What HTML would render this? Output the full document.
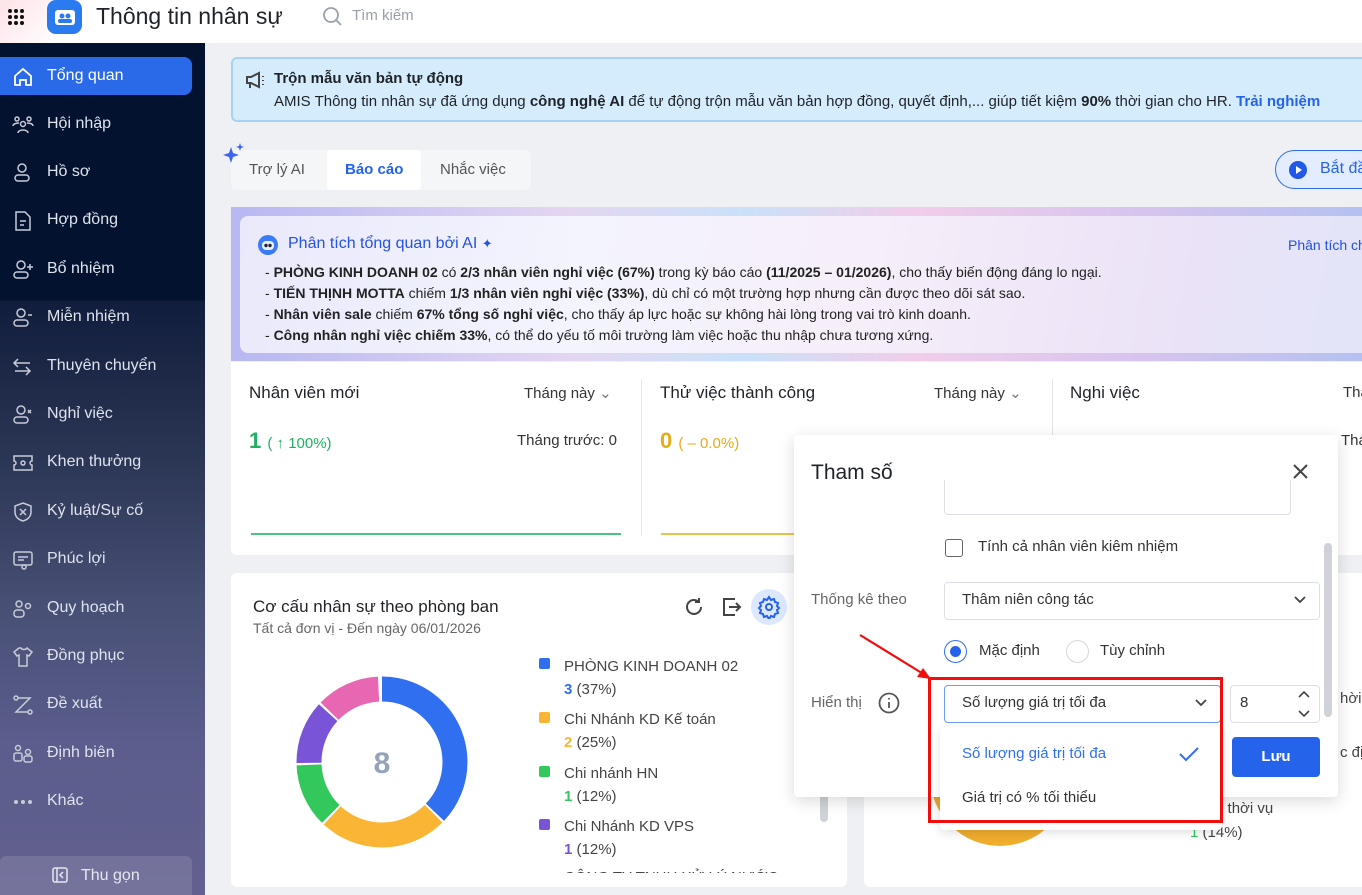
<!DOCTYPE html>
<html><head><meta charset="utf-8"><style>
*{box-sizing:border-box;margin:0;padding:0}
body{width:1362px;height:895px;overflow:hidden;position:relative;background:#eef0f3;font-family:"Liberation Sans",sans-serif;color:#1f2329}
.a{position:absolute;white-space:nowrap}
.side{left:0;top:43px;width:205px;height:852px;background:linear-gradient(180deg,#03132f 0,#03132f 257px,#111d3c 258px,#2c3655 420px,#474f74 560px,#5b5d8c 700px,#62608f 852px)}
.it{position:absolute;left:0;width:192px;height:38px;color:#dfe3ee;font-size:16px;line-height:38px;padding-left:47px;white-space:nowrap}
.it svg{position:absolute;left:12px;top:9px}
.b{font-weight:bold}
.ai p{font-size:14px;line-height:21px;color:#222}
.tt{font-size:17px;color:#1f2329}
</style></head><body>
<!-- header -->
<div class="a" style="left:0;top:0;width:1362px;height:43px;background:#fff"></div>
<div class="a" style="left:0;top:0;width:60px;height:43px;background:linear-gradient(135deg,#fde3e8,#fff)"></div>
<svg class="a" style="left:7px;top:8px" width="20" height="20"><g fill="#111"><circle cx="3" cy="3" r="2"/><circle cx="9" cy="3" r="2"/><circle cx="15" cy="3" r="2"/><circle cx="3" cy="9" r="2"/><circle cx="9" cy="9" r="2"/><circle cx="15" cy="9" r="2"/><circle cx="3" cy="15" r="2"/><circle cx="9" cy="15" r="2"/><circle cx="15" cy="15" r="2"/></g></svg>
<div class="a" style="left:47px;top:0;width:35px;height:34px;background:#2a7bf0;border-radius:9px"></div>
<svg class="a" style="left:54px;top:7px" width="22" height="20"><rect x="1" y="3" width="20" height="15" rx="3" fill="#fff"/><circle cx="8" cy="9" r="2.5" fill="#2a7bf0"/><circle cx="14" cy="9" r="2.5" fill="#2a7bf0"/><rect x="4" y="12" width="14" height="4" rx="2" fill="#2a7bf0"/></svg>
<div class="a" style="left:96px;top:3px;font-size:23px;color:#1f2329">Thông tin nhân sự</div>
<svg class="a" style="left:322px;top:6px" width="22" height="22"><circle cx="9" cy="9" r="7" fill="none" stroke="#9aa0a8" stroke-width="1.8"/><path d="M14 14l5 5" stroke="#9aa0a8" stroke-width="1.8"/></svg>
<div class="a" style="left:352px;top:7px;font-size:15px;color:#9aa0a8">Tìm kiếm</div>
<!-- sidebar -->
<div class="a side"></div>
<div class="it" style="top:57px;background:#2a6ae8;color:#fff;border-radius:0 8px 8px 0"><svg width="22" height="22" fill="none" stroke="#fff" stroke-width="1.8"><path d="M3 10l8-7 8 7v9h-5v-5h-6v5H3z"/></svg>Tổng quan</div>
<div class="it" style="top:105px"><svg width="22" height="22" fill="none" stroke="#c7cbd8" stroke-width="1.5"><circle cx="5" cy="5" r="2"/><circle cx="17" cy="5" r="2"/><circle cx="11" cy="10" r="2.5"/><path d="M6 19c0-4 10-4 10 0M1 12c0-3 6-3 6-3M21 12c0-3-6-3-6-3"/></svg>Hội nhập</div>
<div class="it" style="top:153px"><svg width="22" height="22" fill="none" stroke="#c7cbd8" stroke-width="1.5"><circle cx="10" cy="6" r="4"/><rect x="3" y="13" width="14" height="6" rx="3"/></svg>Hồ sơ</div>
<div class="it" style="top:201px"><svg width="22" height="22" fill="none" stroke="#c7cbd8" stroke-width="1.5"><path d="M4 2h9l5 5v13H4z M8 11h6M8 15h4"/></svg>Hợp đồng</div>
<div class="it" style="top:250px"><svg width="22" height="22" fill="none" stroke="#c7cbd8" stroke-width="1.5"><circle cx="9" cy="6" r="4"/><rect x="2" y="13" width="14" height="6" rx="3"/><path d="M18 5v6M15 8h6"/></svg>Bổ nhiệm</div>
<div class="it" style="top:298px"><svg width="22" height="22" fill="none" stroke="#c7cbd8" stroke-width="1.5"><circle cx="9" cy="6" r="4"/><rect x="2" y="13" width="14" height="6" rx="3"/><path d="M16 8h4"/></svg>Miễn nhiệm</div>
<div class="it" style="top:347px"><svg width="22" height="22" fill="none" stroke="#c7cbd8" stroke-width="1.5"><path d="M6 3L2 7l4 4M2 7h16M14 11l4 4-4 4M18 15H3"/></svg>Thuyên chuyển</div>
<div class="it" style="top:395px"><svg width="22" height="22" fill="none" stroke="#c7cbd8" stroke-width="1.5"><circle cx="9" cy="6" r="4"/><rect x="2" y="13" width="14" height="6" rx="3"/><path d="M16 6l3 3M19 6l-3 3"/></svg>Nghỉ việc</div>
<div class="it" style="top:443px"><svg width="22" height="22" fill="none" stroke="#c7cbd8" stroke-width="1.5"><path d="M2 4h18v5a2 2 0 000 4v5H2v-5a2 2 0 000-4z"/><circle cx="11" cy="11" r="2"/></svg>Khen thưởng</div>
<div class="it" style="top:492px"><svg width="22" height="22" fill="none" stroke="#c7cbd8" stroke-width="1.5"><path d="M11 2l8 3v6c0 5-4 8-8 9-4-1-8-4-8-9V5z M8 8l6 6M14 8l-6 6"/></svg>Kỷ luật/Sự cố</div>
<div class="it" style="top:540px"><svg width="22" height="22" fill="none" stroke="#c7cbd8" stroke-width="1.5"><rect x="2" y="3" width="18" height="13" rx="2"/><path d="M6 8h10M6 11h6"/><circle cx="12" cy="18" r="2"/></svg>Phúc lợi</div>
<div class="it" style="top:589px"><svg width="22" height="22" fill="none" stroke="#c7cbd8" stroke-width="1.5"><circle cx="7" cy="6" r="3"/><rect x="2" y="12" width="10" height="7" rx="3"/><circle cx="16" cy="8" r="2.5"/></svg>Quy hoạch</div>
<div class="it" style="top:637px"><svg width="22" height="22" fill="none" stroke="#c7cbd8" stroke-width="1.5"><path d="M7 2L2 6l3 4 2-1v11h8V9l2 1 3-4-5-4c-1 2-5 2-6 0z"/></svg>Đồng phục</div>
<div class="it" style="top:685px"><svg width="22" height="22" fill="none" stroke="#c7cbd8" stroke-width="1.5"><circle cx="4" cy="4" r="2"/><circle cx="18" cy="18" r="2"/><path d="M6 4h12L4 18h12"/></svg>Đề xuất</div>
<div class="it" style="top:734px"><svg width="22" height="22" fill="none" stroke="#c7cbd8" stroke-width="1.5"><circle cx="6" cy="5" r="2.5"/><rect x="2" y="10" width="8" height="8" rx="2"/><circle cx="16" cy="9" r="2.5"/><rect x="12" y="13" width="8" height="6" rx="2"/></svg>Định biên</div>
<div class="it" style="top:782px"><svg width="22" height="22" fill="#c7cbd8"><circle cx="4" cy="11" r="2"/><circle cx="11" cy="11" r="2"/><circle cx="18" cy="11" r="2"/></svg>Khác</div>
<div class="a" style="left:0;top:856px;width:192px;height:39px;background:rgba(255,255,255,.12);border-radius:6px 6px 0 0;color:#e6e8f0;font-size:16px;line-height:39px;padding-left:81px">Thu gọn</div>
<svg class="a" style="left:51px;top:866px" width="18" height="18" fill="none" stroke="#e6e8f0" stroke-width="1.5"><rect x="2" y="2" width="14" height="14" rx="2"/><path d="M6 2v14M12 6l-3 3 3 3"/></svg>
<!-- banner -->
<div class="a" style="left:231px;top:57px;width:1140px;height:65px;background:#d5ecfc;border:2px solid #a6d3f3;border-radius:6px"></div>
<svg class="a" style="left:245px;top:70px" width="22" height="20" fill="none" stroke="#444" stroke-width="2"><path d="M2 7h4l8-4v14l-8-4H2z M5 13v5M18 6v1M18 10v1M18 14v1"/></svg>
<div class="a b" style="left:274px;top:70px;font-size:15px">Trộn mẫu văn bản tự động</div>
<div class="a" style="left:274px;top:93px;font-size:15px">AMIS Thông tin nhân sự đã ứng dụng <b>công nghệ AI</b> để tự động trộn mẫu văn bản hợp đồng, quyết định,... giúp tiết kiệm <b>90%</b> thời gian cho HR. <b style="color:#2563eb">Trải nghiệm</b></div>
<!-- tabs -->
<div class="a" style="left:231px;top:150px;width:300px;height:40px;background:#f5f6f8;border-radius:6px"></div>
<div class="a" style="left:327px;top:150px;width:94px;height:40px;background:#fff;border-radius:4px"></div>
<svg class="a" style="left:221px;top:143px" width="24" height="24" fill="#3b63f0"><path d="M10 4l2 6 6 2-6 2-2 6-2-6-6-2 6-2z"/><path d="M19 0l1 3 3 1-3 1-1 3-1-3-3-1 3-1z"/></svg>
<div class="a" style="left:249px;top:161px;font-size:15px;color:#555">Trợ lý AI</div>
<div class="a b" style="left:345px;top:161px;font-size:15px;color:#2563eb">Báo cáo</div>
<div class="a" style="left:440px;top:161px;font-size:15px;color:#555">Nhắc việc</div>
<div class="a" style="left:1275px;top:150px;width:120px;height:39px;background:#e3edff;border:1.5px solid #2f6cf0;border-radius:20px"></div>
<svg class="a" style="left:1288px;top:160px" width="20" height="20"><circle cx="10" cy="10" r="9" fill="#2058e8"/><path d="M8 6l6 4-6 4z" fill="#fff"/></svg>
<div class="a" style="left:1320px;top:160px;font-size:16px;color:#2563eb">Bắt đầu</div>
<!-- AI card -->
<div class="a" style="left:231px;top:207px;width:1140px;height:154px;background:linear-gradient(90deg,#b7b8f2,#e4d6f2 30%,#c9e1f8 45%,#f1cdea 60%,#d6c4ee 80%,#b3c1f1)"></div>
<div class="a" style="left:240px;top:216px;width:1130px;height:137px;background:linear-gradient(100deg,#e9e9fb,#f3f4fd 30%,#f6eef9 55%,#ece3f7 80%,#e2e4f8);border-radius:8px"></div>
<svg class="a" style="left:257px;top:234px" width="22" height="22"><circle cx="11" cy="11" r="10" fill="#3a7cf5"/><rect x="5" y="7" width="12" height="9" rx="4" fill="#e6eeff"/><circle cx="9" cy="11.5" r="1.7" fill="#223"/><circle cx="13" cy="11.5" r="1.7" fill="#223"/></svg>
<div class="a" style="left:288px;top:235px;font-size:16px;color:#2451e6">Phân tích tổng quan bởi AI <span style="font-size:13px">✦</span></div>
<div class="a" style="left:1288px;top:237px;font-size:14px;color:#2451e6">Phân tích chi tiết</div>
<div class="a ai" style="left:265px;top:262px">
<p>- <b>PHÒNG KINH DOANH 02</b> có <b>2/3 nhân viên nghỉ việc (67%)</b> trong kỳ báo cáo <b>(11/2025 – 01/2026)</b>, cho thấy biến động đáng lo ngại.</p>
<p>- <b>TIẾN THỊNH MOTTA</b> chiếm <b>1/3 nhân viên nghỉ việc (33%)</b>, dù chỉ có một trường hợp nhưng cần được theo dõi sát sao.</p>
<p>- <b>Nhân viên sale</b> chiếm <b>67% tổng số nghỉ việc</b>, cho thấy áp lực hoặc sự không hài lòng trong vai trò kinh doanh.</p>
<p>- <b>Công nhân nghỉ việc chiếm 33%</b>, có thể do yếu tố môi trường làm việc hoặc thu nhập chưa tương xứng.</p></div>
<!-- KPI -->
<div class="a" style="left:231px;top:362px;width:1140px;height:193px;background:#fff;border-radius:0 0 6px 6px"></div>
<div class="a" style="left:641px;top:379px;width:1px;height:157px;background:#e3e5e8"></div>
<div class="a" style="left:1052px;top:379px;width:1px;height:157px;background:#e3e5e8"></div>
<div class="a tt" style="left:249px;top:383px">Nhân viên mới</div>
<div class="a" style="left:524px;top:384px;font-size:15px;color:#333">Tháng này <span style="color:#777">⌄</span></div>
<div class="a" style="left:249px;top:428px;font-size:22px;color:#1fb063;font-weight:bold">1 <span style="font-size:15px;font-weight:normal">( ↑ 100%)</span></div>
<div class="a" style="left:517px;top:432px;font-size:15px;color:#333">Tháng trước: 0</div>
<div class="a" style="left:251px;top:533px;width:370px;height:2px;background:#4cc182"></div>
<div class="a tt" style="left:660px;top:383px">Thử việc thành công</div>
<div class="a" style="left:934px;top:384px;font-size:15px;color:#333">Tháng này <span style="color:#777">⌄</span></div>
<div class="a" style="left:660px;top:428px;font-size:22px;color:#e6ab17;font-weight:bold">0 <span style="font-size:15px;font-weight:normal">( – 0.0%)</span></div>
<div class="a" style="left:661px;top:533px;width:140px;height:2px;background:#ecc24a"></div>
<div class="a tt" style="left:1070px;top:383px">Nghi việc</div>
<div class="a" style="left:1343px;top:384px;font-size:15px;color:#333">Tháng này</div>
<div class="a" style="left:1341px;top:432px;font-size:15px;color:#333">Tháng trước</div>
<!-- chart card -->
<div class="a" style="left:231px;top:573px;width:616px;height:314px;background:#fff;border-radius:6px"></div>
<div class="a" style="left:253px;top:597px;font-size:17px">Cơ cấu nhân sự theo phòng ban</div>
<div class="a" style="left:253px;top:620px;font-size:14px;color:#666">Tất cả đơn vị - Đến ngày 06/01/2026</div>
<svg class="a" style="left:682px;top:595px" width="24" height="24" fill="none" stroke="#444" stroke-width="2"><path d="M19 12a7 7 0 11-2.5-5.4M17 3v4h-4"/></svg>
<svg class="a" style="left:720px;top:595px" width="24" height="24" fill="none" stroke="#444" stroke-width="2"><path d="M15 4H4v16h11M9 12h11M16 8l4 4-4 4"/></svg>
<div class="a" style="left:751px;top:589px;width:36px;height:36px;border-radius:50%;background:#dce8ff"></div>
<svg class="a" style="left:757px;top:595px" width="24" height="24" fill="none" stroke="#2563eb" stroke-width="2"><circle cx="12" cy="12" r="3"/><path d="M12 2l2 3 3-1 1 3 3 1-1 3 2 2-2 2 1 3-3 1-1 3-3-1-2 3-2-3-3 1-1-3-3-1 1-3-2-2 2-2-1-3 3-1 1-3 3 1z"/></svg>
<svg class="a" style="left:296px;top:676px" width="172" height="172" viewBox="0 0 172 172">
<g transform="rotate(-90 86 86)" fill="none" stroke-width="25">
<circle cx="86" cy="86" r="73" stroke="#2f6ff0" stroke-dasharray="170 289"/>
<circle cx="86" cy="86" r="73" stroke="#fbb535" stroke-dasharray="112 347" stroke-dashoffset="-172"/>
<circle cx="86" cy="86" r="73" stroke="#32c85c" stroke-dasharray="55 404" stroke-dashoffset="-286"/>
<circle cx="86" cy="86" r="73" stroke="#7a54d6" stroke-dasharray="55 404" stroke-dashoffset="-343"/>
<circle cx="86" cy="86" r="73" stroke="#e867b2" stroke-dasharray="55 404" stroke-dashoffset="-400"/>
</g>
<text x="86" y="97" text-anchor="middle" font-family="Liberation Sans" font-size="30" font-weight="bold" fill="#94a3b8">8</text></svg>
<div class="a" style="left:539px;top:658px;width:11px;height:11px;background:#2f6ff0;border-radius:2px"></div>
<div class="a" style="left:564px;top:655px;font-size:15px;color:#444;line-height:23px">PHÒNG KINH DOANH 02<br><span style="color:#2f6ff0;font-weight:bold">3</span> (37%)</div>
<div class="a" style="left:539px;top:712px;width:11px;height:11px;background:#fbb535;border-radius:2px"></div>
<div class="a" style="left:564px;top:708px;font-size:15px;color:#444;line-height:23px">Chi Nhánh KD Kế toán<br><span style="color:#fbb535;font-weight:bold">2</span> (25%)</div>
<div class="a" style="left:539px;top:766px;width:11px;height:11px;background:#32c85c;border-radius:2px"></div>
<div class="a" style="left:564px;top:762px;font-size:15px;color:#444;line-height:23px">Chi nhánh HN<br><span style="color:#32c85c;font-weight:bold">1</span> (12%)</div>
<div class="a" style="left:539px;top:819px;width:11px;height:11px;background:#7a54d6;border-radius:2px"></div>
<div class="a" style="left:564px;top:815px;font-size:15px;color:#444;line-height:23px">Chi Nhánh KD VPS<br><span style="color:#7a54d6;font-weight:bold">1</span> (12%)</div>
<div class="a" style="left:564px;top:866px;height:7px;overflow:hidden;font-size:15px;color:#444;line-height:23px">CÔNG TY TNHH XỬ LÝ NƯỚC</div>
<div class="a" style="left:820px;top:760px;width:8px;height:62px;background:#cfd2d6;border-radius:4px"></div>
<!-- right card -->
<div class="a" style="left:864px;top:573px;width:510px;height:314px;background:#fff;border-radius:6px"></div>
<div class="a" style="left:930px;top:720px;width:140px;height:126px;border-radius:0 0 70px 70px;overflow:hidden"><div style="width:140px;height:140px;border-radius:50%;border:24px solid #f0ad2e;margin-top:-14px"></div></div>
<div class="a" style="left:1190px;top:797px;font-size:15px;color:#444;line-height:24px">đồng thời vụ<br><span style="color:#32c85c">1</span> (14%)</div>
<div class="a" style="left:1340px;top:690px;font-size:15px;color:#444">hời</div>
<div class="a" style="left:1340px;top:744px;font-size:15px;color:#444">c định</div>
<!-- dialog -->
<div class="a" style="left:794px;top:435px;width:544px;height:362px;background:#fff;border-radius:4px;box-shadow:0 4px 16px rgba(0,0,0,.15)"></div>
<div class="a" style="left:811px;top:461px;font-size:21px;color:#1f2329">Tham số</div>
<svg class="a" style="left:1292px;top:463px" width="17" height="17" stroke="#444" stroke-width="2"><path d="M2 2l13 13M15 2L2 15"/></svg>
<div class="a" style="left:944px;top:480px;width:347px;height:35px;border:1px solid #dcdfe3;border-top:none;border-radius:0 0 4px 4px"></div>
<div class="a" style="left:945px;top:539px;width:18px;height:18px;border:1.5px solid #666;border-radius:3px"></div>
<div class="a" style="left:978px;top:538px;font-size:15px;color:#333">Tính cả nhân viên kiêm nhiệm</div>
<div class="a" style="left:811px;top:591px;font-size:15px;color:#666">Thống kê theo</div>
<div class="a" style="left:944px;top:582px;width:376px;height:38px;border:1px solid #dcdfe3;border-radius:4px"></div>
<div class="a" style="left:962px;top:591px;font-size:15px;color:#333">Thâm niên công tác</div>
<svg class="a" style="left:1293px;top:595px" width="14" height="10" fill="none" stroke="#444" stroke-width="1.8"><path d="M2 2l5 5 5-5"/></svg>
<div class="a" style="left:944px;top:640px;width:23px;height:23px;border:1.5px solid #2f6ff0;border-radius:50%"></div>
<div class="a" style="left:950px;top:646px;width:11px;height:11px;background:#2563eb;border-radius:50%"></div>
<div class="a" style="left:979px;top:642px;font-size:15px;color:#333">Mặc định</div>
<div class="a" style="left:1066px;top:640px;width:23px;height:23px;border:1px solid #d5d8dc;border-radius:50%"></div>
<div class="a" style="left:1100px;top:642px;font-size:15px;color:#333">Tùy chỉnh</div>
<div class="a" style="left:811px;top:694px;font-size:15px;color:#666">Hiển thị</div>
<svg class="a" style="left:878px;top:692px" width="22" height="22" fill="none" stroke="#555" stroke-width="1.8"><circle cx="11" cy="11" r="9.5"/><path d="M11 10v6M11 6v1.5"/></svg>
<div class="a" style="left:944px;top:685px;width:277px;height:38px;border:1px solid #6b9cf6;border-radius:4px"></div>
<div class="a" style="left:962px;top:694px;font-size:15px;color:#333">Số lượng giá trị tối đa</div>
<svg class="a" style="left:1194px;top:698px" width="14" height="10" fill="none" stroke="#444" stroke-width="1.8"><path d="M2 2l5 5 5-5"/></svg>
<div class="a" style="left:1230px;top:685px;width:90px;height:38px;border:1px solid #dcdfe3;border-radius:4px"></div>
<div class="a" style="left:1240px;top:694px;font-size:15px;color:#333">8</div>
<svg class="a" style="left:1297px;top:689px" width="14" height="30" fill="none" stroke="#444" stroke-width="1.6"><path d="M2 8l5-5 5 5M2 22l5 5 5-5"/></svg>
<div class="a" style="left:1232px;top:737px;width:88px;height:40px;background:#2563eb;border-radius:4px;color:#fff;font-weight:bold;font-size:15px;text-align:center;line-height:40px">Lưu</div>
<div class="a" style="left:1324px;top:543px;width:8px;height:174px;background:#cfd2d6;border-radius:4px"></div>
<div class="a" style="left:940px;top:727px;width:282px;height:103px;background:#fff;border-radius:4px;box-shadow:0 3px 10px rgba(0,0,0,.12)"></div>
<div class="a" style="left:962px;top:745px;font-size:15px;color:#2f6ff0">Số lượng giá trị tối đa</div>
<svg class="a" style="left:1178px;top:745px" width="22" height="18" fill="none" stroke="#2f6ff0" stroke-width="2"><path d="M2 9l6 6L20 3"/></svg>
<div class="a" style="left:962px;top:789px;font-size:15px;color:#333">Giá trị có % tối thiểu</div>
<div class="a" style="left:928px;top:677px;width:295px;height:146px;border:3px solid #f20d0d"></div>
<svg class="a" style="left:855px;top:630px" width="82" height="52"><path d="M5 5L70 45" stroke="#f20d0d" stroke-width="2.2"/><path d="M76 49l-14-2 6-9z" fill="#f20d0d"/></svg>
</body></html>
